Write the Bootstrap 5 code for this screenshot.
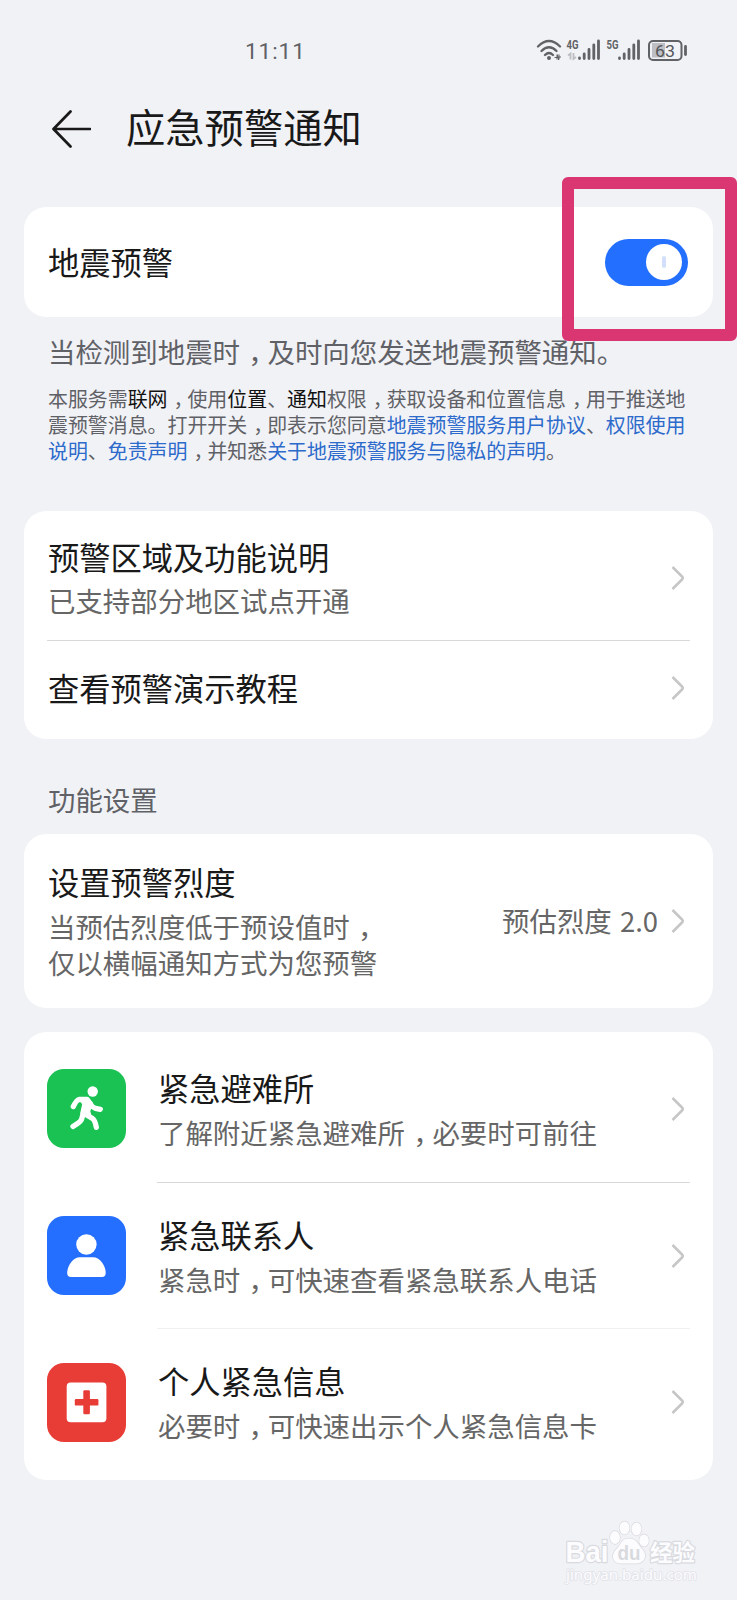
<!DOCTYPE html>
<html lang="zh-CN">
<head>
<meta charset="utf-8">
<meta name="viewport" content="width=device-width, initial-scale=1">
<title>应急预警通知</title>
<link href="https://cdn.jsdelivr.net/npm/bootstrap@5.3.0/dist/css/bootstrap.min.css" rel="stylesheet">
<style>
  body { background: #f1f2f6; color: #191919; font-family: "Noto Sans CJK SC", sans-serif; min-height: 1600px; overflow-x: hidden; }
  .status { height: 100px; padding: 0 47px 0 245px; }
  .clock { font: 22.5px/30px Roboto, sans-serif; letter-spacing: .95px; color: #606266; padding-top: 2px; }
  .topbar { height: 58px; padding-left: 51px; gap: 35px; }
  .topbar h1 { font-size: 39.3px; line-height: 56px; font-weight: 400; margin-top: -6px; }
  .panel { background: #fff; border: 0; border-radius: 22px; margin: 0 24px; }
  .item { padding: 0 23px 0 24px; }
  .ttl { font-size: 31.25px; line-height: 44px; white-space: nowrap; }
  .sub { font-size: 27.45px; line-height: 36px; color: #666; margin-top: 4px; white-space: nowrap; }
  .raised { margin-top: -2px; }
  .note { color: #606166; padding-left: 48px; white-space: nowrap; }
  .note-main { font-size: 27.45px; line-height: 36px; }
  .note-small { font-size: 19.93px; line-height: 25.9px; }
  .note-small a { color: #2c6acb; text-decoration: none; }
  .note-small b { color: #111; font-weight: 400; }
  .comma { font-feature-settings: "halt"; padding-left: .3em; padding-right: .2em; }
  .rule { height: 1px; background: #d9d9d9; margin: 0 23px; }
  .rule-inset { margin-left: 133px; }
  .chev { width: 14px; height: 26px; flex: none; margin-right: 5px; }
  .tile { width: 79px; height: 79px; border-radius: 17px; flex: none; margin-right: 32px; margin-left: -1px; }
  .toggle { width: 83px; height: 47px; border-radius: 24px; background: #236fff; padding-right: 6px; margin-right: 2px; }
  .knob { width: 36px; height: 36px; border-radius: 50%; background: #fff; }
  .knob i { width: 4px; height: 12px; border-radius: 2px; background: #d3e0fb; }
  .marker { position: absolute; left: 562px; top: 177px; width: 175px; height: 164px; border: 12px solid #d93672; border-radius: 6px; }
</style>
</head>
<body>
<div class="status d-flex justify-content-between align-items-center">
  <span class="clock">11:11</span>
  <svg width="155" height="30" viewBox="535 35 155 30" fill="none" stroke="#606266" font-family="Roboto, sans-serif">
    <path d="M538 46.500Q549 35.500 560 46.500M541.500 51Q549 43.500 556.500 51M545 55Q549 51 553 55" stroke-width="2.300" stroke-linecap="round"/>
    <circle cx="549" cy="58" r="2" fill="#606266" stroke="none"/>
    <path d="M554.500 57.500h3v-3M561 57h-2.500v3M557 54.500v5M559 54.500v5" stroke-width="1.100"/>
    <path d="M568 55.500l2.500-2v6M576 57l-2.500 2v-6" stroke="#bcbec2" stroke-width="1.800"/>
    <g stroke-width="2.800" stroke-linecap="round">
      <path d="M579.500 58v.5M584.200 54v4.500M589 49.500v9M593.800 45v13.500M598.500 41v17.500"/>
      <path d="M619.500 58v.5M624.200 54v4.500M629 49.500v9M633.800 45v13.500M638.500 41v17.500"/>
    </g>
    <g fill="#606266" stroke="none" font-size="12" font-weight="700">
      <text x="566.500" y="48.500" textLength="12" lengthAdjust="spacingAndGlyphs">4G</text>
      <text x="606.500" y="48.500" textLength="12" lengthAdjust="spacingAndGlyphs">5G</text>
    </g>
    <path d="M652 43h13v14.500h-13z" fill="#bdbfc4" stroke="none"/>
    <rect x="649" y="41" width="32.500" height="19" rx="4" stroke-width="2"/>
    <path d="M685.500 46.500v8" stroke-width="2.800" stroke-linecap="round"/>
    <text x="655" y="56.700" font-size="17" fill="#55575b" stroke="none" textLength="20" lengthAdjust="spacingAndGlyphs">63</text>
  </svg>
</div>

<header class="topbar d-flex align-items-center">
  <svg width="40" height="40" viewBox="0 0 40 40" fill="none" stroke="#191919" stroke-width="2.700" stroke-linecap="round" stroke-linejoin="round"><path d="M19.500 2.500L2.500 20l17 17.500M3 20h36"/></svg>
  <h1 class="mb-0">应急预警通知</h1>
</header>

<main>
  <section class="panel" style="margin-top:49px">
    <div class="item d-flex align-items-center justify-content-between" style="height:110px">
      <div class="ttl">地震预警</div>
      <div class="toggle d-flex align-items-center justify-content-end" role="switch" aria-checked="true">
        <div class="knob d-flex align-items-center justify-content-center"><i></i></div>
      </div>
    </div>
  </section>

  <div class="note note-main" style="padding-top:16px">当检测到地震时<span class="comma">，</span>及时向您发送地震预警通知。</div>
  <div class="note note-small" style="padding-top:17px;height:142px">
    本服务需<b>联网</b><span class="comma">，</span>使用<b>位置</b>、<b>通知</b>权限<span class="comma">，</span>获取设备和位置信息<span class="comma">，</span>用于推送地<br>
    震预警消息。打开开关<span class="comma">，</span>即表示您同意<a href="#">地震预警服务用户协议</a>、<a href="#">权限使用</a><br>
    <a href="#">说明</a>、<a href="#">免责声明</a><span class="comma">，</span>并知悉<a href="#">关于地震预警服务与隐私的声明</a>。
  </div>

  <section class="panel">
    <div class="item d-flex align-items-center justify-content-between" style="height:129px;padding-top:5px">
      <div style="margin-top:-3px"><div class="ttl">预警区域及功能说明</div><div class="sub" style="margin-top:3px">已支持部分地区试点开通</div></div>
      <svg class="chev" viewBox="0 0 14 26"><path d="M1.500 2L11 11.500Q12.500 13 11 14.500L1.500 24" fill="none" stroke="#c6c6c6" stroke-width="2.500"/></svg>
    </div>
    <div class="rule"></div>
    <div class="item d-flex align-items-center justify-content-between" style="height:98px;padding-bottom:5px">
      <div class="ttl">查看预警演示教程</div>
      <svg class="chev" viewBox="0 0 14 26"><path d="M1.500 2L11 11.500Q12.500 13 11 14.500L1.500 24" fill="none" stroke="#c6c6c6" stroke-width="2.500"/></svg>
    </div>
  </section>

  <div class="note note-main" style="padding-top:42px;height:95px">功能设置</div>

  <section class="panel">
    <div class="item d-flex align-items-center" style="height:174px">
      <div class="me-auto" style="margin-top:-3px"><div class="ttl">设置预警烈度</div><div class="sub">当预估烈度低于预设值时<span class="comma">，</span><br>仅以横幅通知方式为您预警</div></div>
      <div class="sub" style="margin:-3px 13px 0 0;word-spacing:2px">预估烈度 2.0</div>
      <svg class="chev" viewBox="0 0 14 26"><path d="M1.500 2L11 11.500Q12.500 13 11 14.500L1.500 24" fill="none" stroke="#c6c6c6" stroke-width="2.500"/></svg>
    </div>
  </section>

  <section class="panel" style="margin-top:24px">
    <div class="item d-flex align-items-center" style="height:150px;padding-top:3px">
      <svg class="tile" viewBox="0 0 79 79"><rect width="79" height="79" fill="#1ac153"/>
        <circle cx="45.700" cy="22.500" r="5.200" fill="#fff"/>
        <path d="M33 29.500h7l5 5-3 7.500 1 4-7 1-1.500-3 2-9z" fill="#fff" stroke="#fff" stroke-width="2.500" stroke-linejoin="round"/>
        <path d="M26.300 37.500Q29.500 31 32 30.500L40 30.500M41 31.500Q45 38.500 48.500 39.300L53.300 40.300M36.500 43.500L34.500 50.500Q33.500 53 26 57.500M38 45L45.500 49.500Q48 51 49.300 58.300" fill="none" stroke="#fff" stroke-width="5.300" stroke-linecap="round" stroke-linejoin="round"/></svg>
      <div class="me-auto raised"><div class="ttl">紧急避难所</div><div class="sub">了解附近紧急避难所<span class="comma">，</span>必要时可前往</div></div>
      <svg class="chev" viewBox="0 0 14 26"><path d="M1.500 2L11 11.500Q12.500 13 11 14.500L1.500 24" fill="none" stroke="#c6c6c6" stroke-width="2.500"/></svg>
    </div>
    <div class="rule rule-inset"></div>
    <div class="item d-flex align-items-center" style="height:145px">
      <svg class="tile" viewBox="0 0 79 79"><rect width="79" height="79" fill="#246fff"/>
        <circle cx="39.400" cy="28.500" r="10.200" fill="#fff"/>
        <path d="M33 41.300H46C53 41.300 58.700 50 58.700 57Q58.700 61 55 61H24Q20.200 61 20.200 57C20.200 50 26 41.300 33 41.300z" fill="#fff"/></svg>
      <div class="me-auto raised"><div class="ttl">紧急联系人</div><div class="sub">紧急时<span class="comma">，</span>可快速查看紧急联系人电话</div></div>
      <svg class="chev" viewBox="0 0 14 26"><path d="M1.500 2L11 11.500Q12.500 13 11 14.500L1.500 24" fill="none" stroke="#c6c6c6" stroke-width="2.500"/></svg>
    </div>
    <div class="rule rule-inset" style="background:#f0f0f0"></div>
    <div class="item d-flex align-items-center" style="height:151px;padding-bottom:5px">
      <svg class="tile" viewBox="0 0 79 79"><rect width="79" height="79" fill="#e83d37"/>
        <rect x="19.700" y="19.500" width="39.700" height="39.700" rx="4" fill="#fff"/>
        <g fill="#e83d37"><rect x="36.300" y="27.200" width="6.600" height="24" rx="1.200"/><rect x="27.800" y="36" width="23.600" height="6.600" rx="1.200"/></g></svg>
      <div class="me-auto raised"><div class="ttl">个人紧急信息</div><div class="sub">必要时<span class="comma">，</span>可快速出示个人紧急信息卡</div></div>
      <svg class="chev" viewBox="0 0 14 26"><path d="M1.500 2L11 11.500Q12.500 13 11 14.500L1.500 24" fill="none" stroke="#c6c6c6" stroke-width="2.500"/></svg>
    </div>
  </section>
</main>

<footer class="d-flex justify-content-end" style="padding:38px 37px 0 0">
  <svg width="137" height="70" viewBox="563 1517 137 70" fill="#fcfcff" stroke="#d9dade" stroke-width="2.400" paint-order="stroke" stroke-linejoin="round">
    <text x="565.500" y="1561" font-family="Liberation Sans, sans-serif" font-weight="700" font-size="29" textLength="43" lengthAdjust="spacingAndGlyphs">Bai</text>
    <g stroke-width="1.300">
      <ellipse cx="615" cy="1536.500" rx="5" ry="6.500"/><ellipse cx="624.500" cy="1527" rx="5" ry="6.500"/><ellipse cx="636.500" cy="1528" rx="5" ry="6.500"/><ellipse cx="644" cy="1539.500" rx="4.800" ry="6"/>
      <path d="M629 1537.500C637 1537.500 638 1544 643 1549C648 1555 644 1563 635 1562.500H622C613 1563 610 1555 616 1548.500C621 1544 621 1537.500 629 1537.500z"/>
    </g>
    <text x="617.500" y="1559" font-family="Liberation Sans, sans-serif" font-weight="700" font-size="20" fill="#d9dade" stroke="none" textLength="23" lengthAdjust="spacingAndGlyphs">du</text>
    <text x="650" y="1560" font-family="Noto Sans CJK SC, sans-serif" font-weight="700" font-size="23" textLength="45" lengthAdjust="spacingAndGlyphs">经验</text>
    <text x="566" y="1579" font-family="Noto Sans, sans-serif" font-size="14.500" stroke-width="1.600" stroke="#e2e3e8" textLength="131" lengthAdjust="spacingAndGlyphs">jingyan.baidu.com</text>
  </svg>
</footer>
<div class="marker"></div>
<script src="https://cdn.jsdelivr.net/npm/bootstrap@5.3.0/dist/js/bootstrap.bundle.min.js"></script>
</body>
</html>
